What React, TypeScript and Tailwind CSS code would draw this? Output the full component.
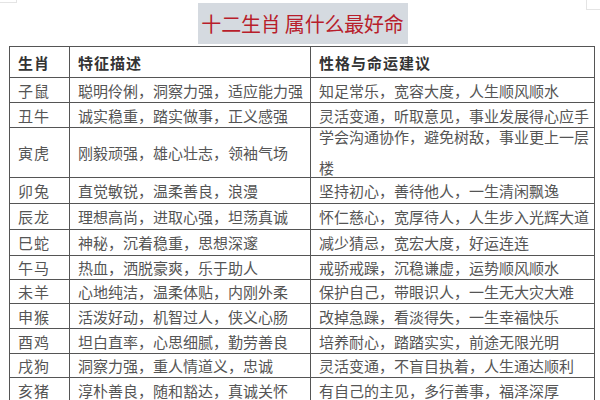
import React from "react";

const rows: { a: string; b: string; c: React.ReactNode; h: string }[] = [
  { a: "子鼠", b: "聪明伶俐，洞察力强，适应能力强", c: "知足常乐，宽容大度，人生顺风顺水", h: "h-[25px]" },
  { a: "丑牛", b: "诚实稳重，踏实做事，正义感强", c: "灵活变通，听取意见，事业发展得心应手", h: "h-[25px]" },
  {
    a: "寅虎",
    b: "刚毅顽强，雄心壮志，领袖气场",
    c: (
      <div className="flex flex-col gap-[16px] pb-[2px]">
        <span>学会沟通协作，避免树敌，事业更上一层</span>
        <span>楼</span>
      </div>
    ),
    h: "h-[50px]",
  },
  { a: "卯兔", b: "直觉敏锐，温柔善良，浪漫", c: "坚持初心，善待他人，一生清闲飘逸", h: "h-[26px]" },
  { a: "辰龙", b: "理想高尚，进取心强，坦荡真诚", c: "怀仁慈心，宽厚待人，人生步入光辉大道", h: "h-[26px]" },
  { a: "巳蛇", b: "神秘，沉着稳重，思想深邃", c: "减少猜忌，宽宏大度，好运连连", h: "h-[26px]" },
  { a: "午马", b: "热血，洒脱豪爽，乐于助人", c: "戒骄戒躁，沉稳谦虚，运势顺风顺水", h: "h-[24px]" },
  { a: "未羊", b: "心地纯洁，温柔体贴，内刚外柔", c: "保护自己，带眼识人，一生无大灾大难", h: "h-[24px]" },
  { a: "申猴", b: "活泼好动，机智过人，侠义心肠", c: "改掉急躁，看淡得失，一生幸福快乐", h: "h-[25px]" },
  { a: "酉鸡", b: "坦白直率，心思细腻，勤劳善良", c: "培养耐心，踏踏实实，前途无限光明", h: "h-[25px]" },
  { a: "戌狗", b: "洞察力强，重人情道义，忠诚", c: "灵活变通，不盲目执着，人生通达顺利", h: "h-[24px]" },
  { a: "亥猪", b: "淳朴善良，随和豁达，真诚关怀", c: "有自己的主见，多行善事，福泽深厚", h: "h-[25px]" },
];

const cell = "border border-[#555] pl-[8px] p-0 leading-none whitespace-nowrap";

export default function App() {
  return (
    <div
      className="w-[600px] h-[400px] overflow-hidden bg-white relative"
      style={{ fontFamily: '"Noto Sans CJK SC", "Noto Sans", sans-serif' }}
    >
      <div className="absolute left-0 top-0 w-[17px] h-[3px] border-b border-r border-[#e4e4e4]" />
      <div className="absolute right-0 top-0 w-[14px] h-[10px] border-b border-l border-[#e4e4e4]" />
      <div className="flex justify-center pt-[3px]">
        <div className="ml-[5px] w-[210px] h-[41px] bg-[#d5dae0] flex items-center justify-center">
          <span className="text-[20px] leading-none text-[#b81d2b] tracking-[-0.2px]">
            十二生肖&nbsp;属什么最好命
          </span>
        </div>
      </div>
      <table className="ml-[9px] mt-[2px] w-[585px] border-collapse table-fixed text-[15px] text-[#555]">
        <colgroup>
          <col className="w-[60px]" />
          <col className="w-[241px]" />
          <col className="w-[284px]" />
        </colgroup>
        <thead>
          <tr className="h-[31px]">
            <th className={`${cell} text-left font-bold text-[#333] tracking-[1px]`}>生肖</th>
            <th className={`${cell} text-left font-bold text-[#333] tracking-[1px]`}>特征描述</th>
            <th className={`${cell} text-left font-bold text-[#333] tracking-[1px]`}>性格与命运建议</th>
          </tr>
        </thead>
        <tbody>
          {rows.map((r) => (
            <tr key={r.a} className={r.h}>
              <td className={`${cell} tracking-[1px]`}>{r.a}</td>
              <td className={cell}>{r.b}</td>
              <td className={cell}>{r.c}</td>
            </tr>
          ))}
        </tbody>
      </table>
    </div>
  );
}
